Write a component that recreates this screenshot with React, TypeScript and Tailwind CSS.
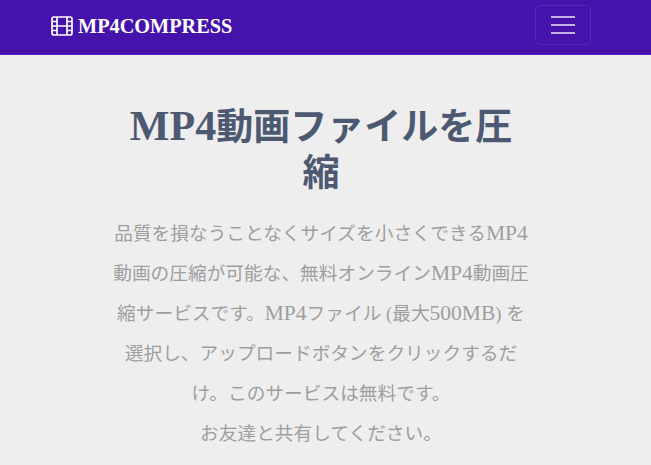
const serif = "font-['Liberation_Serif','Noto_Sans_CJK_JP',serif]"

function FilmIcon() {
  return (
    <svg width="22" height="20" viewBox="0 0 22 20" fill="none" stroke="white" strokeWidth="1.7">
      <rect x="1" y="1" width="20" height="18" rx="2" />
      <path d="M6 1v18M16 1v18M6 10h10M1 5.5h5M1 10h5M1 14.5h5M16 5.5h5M16 10h5M16 14.5h5" />
    </svg>
  )
}

function Mp4({ className }: { className: string }) {
  return <span className={className}>MP4</span>
}

export default function App() {
  const latin = 'text-[21.5px] leading-none'
  return (
    <div className={`h-[465px] overflow-hidden bg-[#eeeeee] ${serif}`}>
      <nav className="h-[55px] border-b border-[#5a20c4] bg-[#4512ab] pl-[51px] pr-[60px] pb-[4px] flex items-center justify-between">
        <a href="#" className="flex items-center gap-[5px] pt-[2px] text-white font-bold text-[20.3px] leading-none">
          <FilmIcon />
          MP4COMPRESS
        </a>
        <button className="w-[56px] h-[40px] rounded-[5px] border border-[#5726b3] flex flex-col items-center justify-center gap-[6px]">
          <span className="block w-[24px] h-[2px] bg-[#c5b2ea]" />
          <span className="block w-[24px] h-[2px] bg-[#c5b2ea]" />
          <span className="block w-[24px] h-[2px] bg-[#c5b2ea]" />
        </button>
      </nav>
      <main className="ml-[101px] w-[440px] pt-[50px] text-center">
        <h1 className="text-[37px] leading-[46px] font-bold text-[#4d5871]">
          <Mp4 className="text-[42px] leading-none" />動画ファイルを圧<br />縮
        </h1>
        <p className="mt-[17px] text-[18.7px] leading-[40px] text-[#9e9e9e]">
          品質を損なうことなくサイズを小さくできる<Mp4 className={latin} /><br />
          動画の圧縮が可能な、無料オンライン<Mp4 className={latin} />動画圧<br />
          縮サービスです。<Mp4 className={latin} />ファイル (最大<span className={latin}>500MB</span>) を<br />
          選択し、アップロードボタンをクリックするだ<br />
          け。このサービスは無料です。
        </p>
        <p className="text-[18.7px] leading-[40px] text-[#9e9e9e]">お友達と共有してください。</p>
      </main>
    </div>
  )
}
